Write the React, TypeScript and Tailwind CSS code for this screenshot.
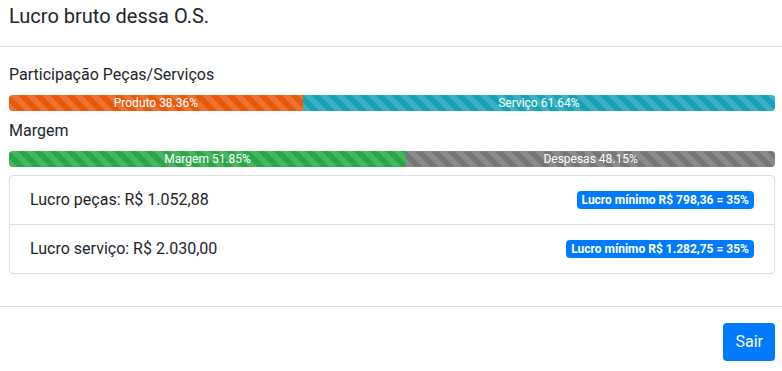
import React from "react";

const stripe =
  "bg-[linear-gradient(45deg,rgba(255,255,255,.15)_25%,transparent_25%,transparent_50%,rgba(255,255,255,.15)_50%,rgba(255,255,255,.15)_75%,transparent_75%,transparent)] bg-size-[16px_16px] bg-[length:16px_16px]";

function Bar({ segs }: { segs: { label: string; pct: number; color: string }[] }) {
  return (
    <div className="flex h-4 w-full overflow-hidden rounded bg-[#e9ecef] text-[12px] leading-4 text-white">
      {segs.map((s) => (
        <div
          key={s.label}
          className={`flex items-center justify-center whitespace-nowrap ${s.color} ${stripe}`}
          style={{ width: `${s.pct}%` }}
        >
          {s.label}
        </div>
      ))}
    </div>
  );
}

export default function App() {
  return (
    <div className="w-[782px] h-[371px] overflow-hidden bg-white font-['Roboto',sans-serif] text-[#212529] text-base leading-6">
      <div className="border-b border-[#dee2e6] pl-[9px] pr-[7px] pt-px pb-[15px]">
        <h5 className="text-[20px] leading-[30px] font-normal">Lucro bruto dessa O.S.</h5>
      </div>
      <div className="pl-[9px] pr-[7px] py-4">
        <label className="block mb-2">Participação Peças/Serviços</label>
        <Bar
          segs={[
            { label: "Produto 38.36%", pct: 38.36, color: "bg-[#e8590c]" },
            { label: "Serviço 61.64%", pct: 61.64, color: "bg-[#17a2b8]" },
          ]}
        />
        <label className="block mt-2 mb-2">Margem</label>
        <Bar
          segs={[
            { label: "Margem 51.85%", pct: 51.85, color: "bg-[#28a745]" },
            { label: "Despesas 48.15%", pct: 48.15, color: "bg-[#777777]" },
          ]}
        />
        <div className="mt-2 mb-4 rounded border border-[rgba(0,0,0,0.125)]">
          <div className="flex items-center justify-between px-5 py-3">
            <span>Lucro peças: R$ 1.052,88</span>
            <span className="rounded bg-[#007bff] px-[5px] py-[3px] text-[12px] font-bold leading-none text-white">
              Lucro mínimo R$ 798,36 = 35%
            </span>
          </div>
          <div className="flex items-center justify-between border-t border-[rgba(0,0,0,0.125)] px-5 py-3">
            <span>Lucro serviço: R$ 2.030,00</span>
            <span className="rounded bg-[#007bff] px-[5px] py-[3px] text-[12px] font-bold leading-none text-white">
              Lucro mínimo R$ 1.282,75 = 35%
            </span>
          </div>
        </div>
      </div>
      <div className="flex justify-end border-t border-[#dee2e6] pl-[9px] pr-[7px] py-4">
        <button className="rounded bg-[#007bff] px-3 py-[7px] text-base leading-6 text-white">Sair</button>
      </div>
    </div>
  );
}
